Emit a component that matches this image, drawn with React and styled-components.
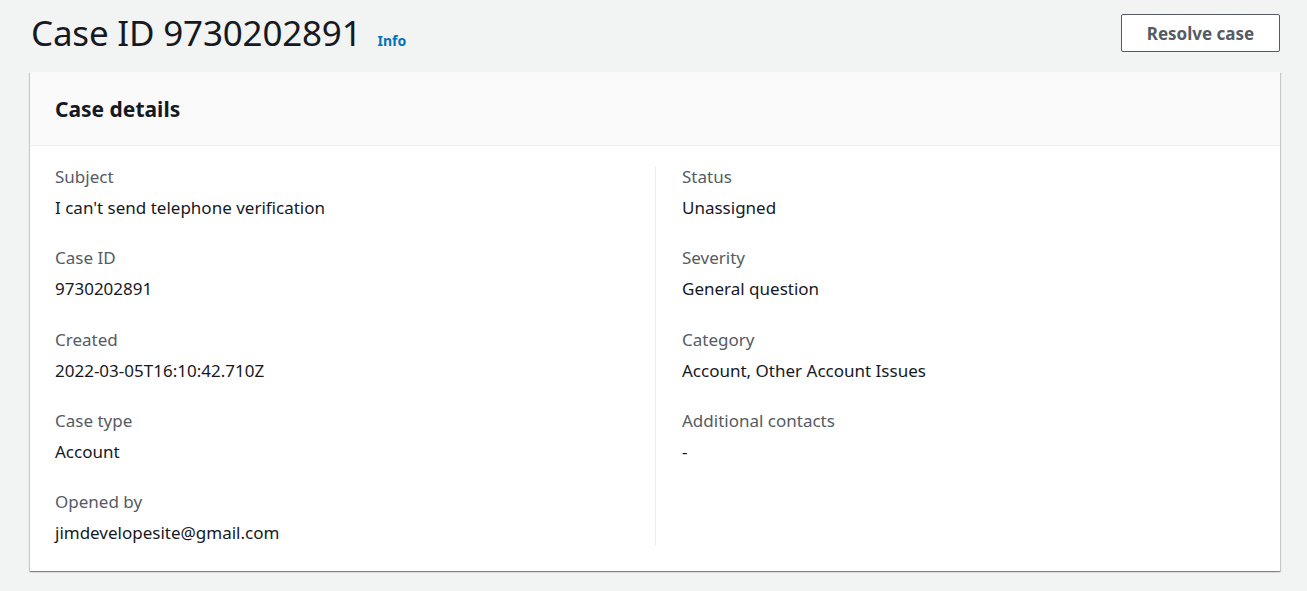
import React from "react";
import styled, { createGlobalStyle } from "styled-components";

const GlobalStyle = createGlobalStyle`
  html, body {
    margin: 0;
    padding: 0;
    background: #f2f3f3;
    font-family: "Noto Sans", "Open Sans", Arial, sans-serif;
    color: #16191f;
  }
`;

const Page = styled.div`
  padding: 14px 27px 20px 30px;
  box-sizing: border-box;
  width: 1307px;
`;

const Header = styled.div`
  display: flex;
  align-items: center;
  justify-content: space-between;
  height: 38px;
  margin-bottom: 20px;
`;

const TitleWrap = styled.div`
  display: flex;
  align-items: baseline;
  gap: 16px;
  padding-left: 1px;
`;

const Title = styled.h1`
  margin: 0;
  font-size: 35px;
  font-weight: 400;
  letter-spacing: -0.2px;
  line-height: 38px;
  color: #16191f;
`;

const InfoLink = styled.a`
  font-size: 14px;
  font-weight: 700;
  color: #0073bb;
  text-decoration: none;
`;

const Button = styled.button`
  width: 159px;
  height: 38px;
  border: 1px solid #545b64;
  border-radius: 2px;
  background: #fff;
  color: #545b64;
  font-family: inherit;
  font-size: 17px;
  font-weight: 700;
  cursor: pointer;
`;

const Card = styled.section`
  background: #fff;
  box-shadow: 0 1px 1px 0 rgba(0, 28, 36, 0.3), 1px 1px 1px 0 rgba(0, 28, 36, 0.15),
    -1px 1px 1px 0 rgba(0, 28, 36, 0.15);
`;

const CardHeader = styled.div`
  background: #fafafa;
  border-bottom: 1px solid #eaeded;
  height: 73px;
  display: flex;
  align-items: center;
  padding: 0 25px;
`;

const CardTitle = styled.h2`
  margin: 0;
  font-size: 21px;
  font-weight: 700;
  color: #16191f;
`;

const CardBody = styled.div`
  display: grid;
  grid-template-columns: 1fr 1fr;
  padding: 20px 25px 25px;
`;

const Column = styled.div`
  display: flex;
  flex-direction: column;
  gap: 28.3px;
  padding-right: 26px;
  padding-bottom: 2px;
  ${(p) => p.$divided && "border-left: 1px solid #eaeded; padding-left: 26px;"}
`;

const Field = styled.div`
  display: flex;
  flex-direction: column;
  gap: 9px;
`;

const Label = styled.div`
  font-size: 17px;
  line-height: 22px;
  color: #545b64;
`;

const Value = styled.div`
  font-size: 17px;
  line-height: 22px;
  color: #16191f;
`;

const left = [
  ["Subject", "I can't send telephone verification"],
  ["Case ID", "9730202891"],
  ["Created", "2022-03-05T16:10:42.710Z"],
  ["Case type", "Account"],
  ["Opened by", "jimdevelopesite@gmail.com"],
];

const right = [
  ["Status", "Unassigned"],
  ["Severity", "General question"],
  ["Category", "Account, Other Account Issues"],
  ["Additional contacts", "-"],
];

const renderFields = (items) =>
  items.map(([label, value]) => (
    <Field key={label}>
      <Label>{label}</Label>
      <Value>{value}</Value>
    </Field>
  ));

export default function App() {
  return (
    <>
      <GlobalStyle />
      <Page>
        <Header>
          <TitleWrap>
            <Title>Case ID 9730202891</Title>
            <InfoLink href="#">Info</InfoLink>
          </TitleWrap>
          <Button>Resolve case</Button>
        </Header>
        <Card>
          <CardHeader>
            <CardTitle>Case details</CardTitle>
          </CardHeader>
          <CardBody>
            <Column>{renderFields(left)}</Column>
            <Column $divided>{renderFields(right)}</Column>
          </CardBody>
        </Card>
      </Page>
    </>
  );
}
